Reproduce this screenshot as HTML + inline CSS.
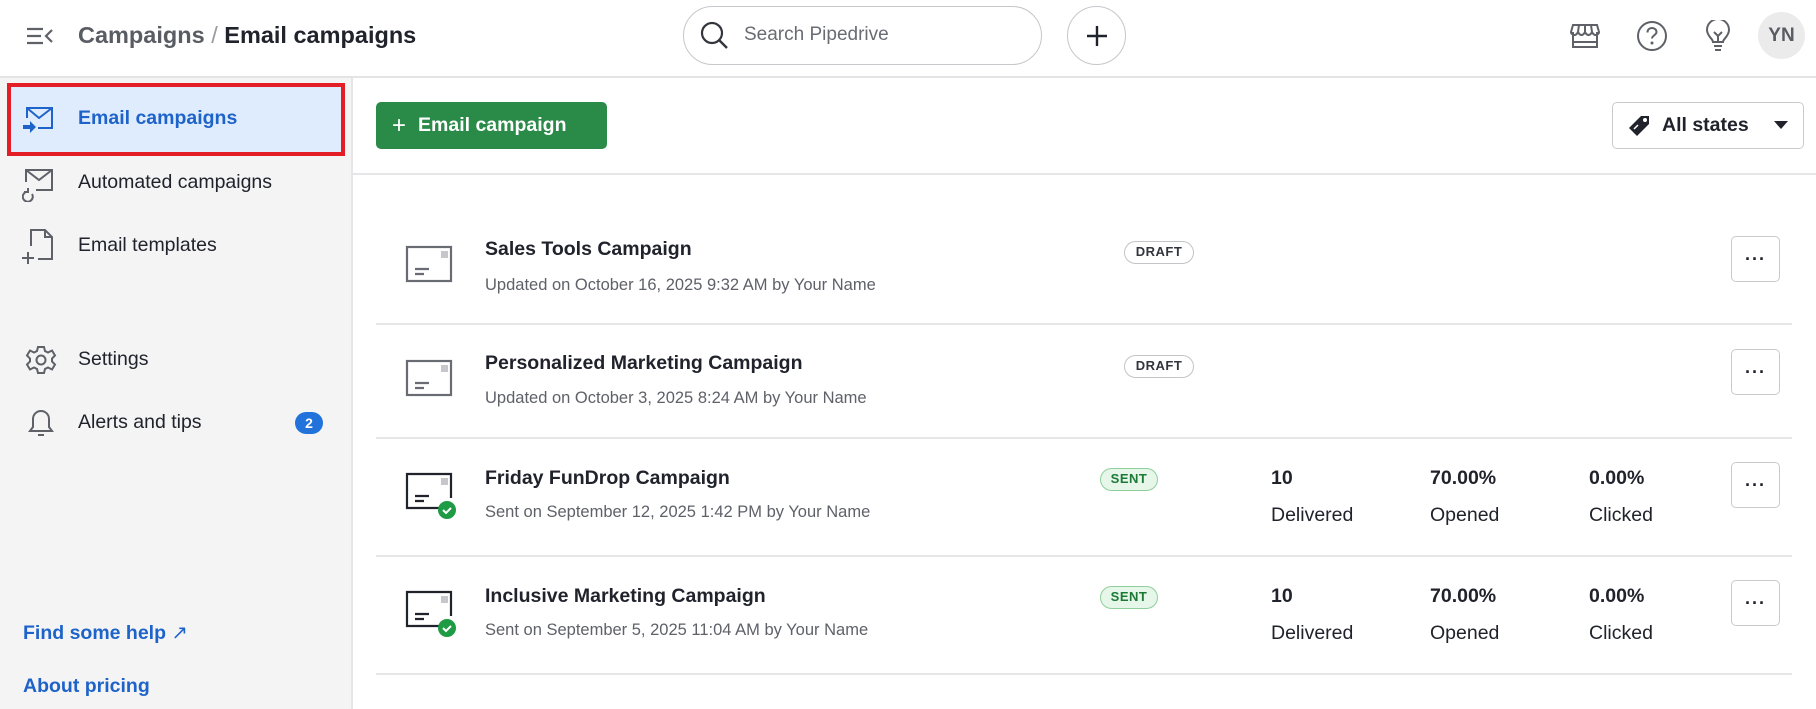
<!DOCTYPE html>
<html><head><meta charset="utf-8"><style>
*{box-sizing:border-box;margin:0;padding:0}
body{width:1816px;height:709px;overflow:hidden;background:#fff;font-family:"Liberation Sans",Arial,sans-serif;color:#21232c;position:relative}
.abs{position:absolute}
.hdr{left:0;top:0;width:1816px;height:78px;border-bottom:2px solid #e4e4e6;background:#fff}
.side{left:0;top:78px;width:353px;height:631px;background:#f4f4f5;border-right:2px solid #e6e6e8}
.nav{font-size:19.5px;color:#21232c}
.ico{stroke:#5f6169;fill:none;stroke-width:2}
.btn3{width:49px;height:46px;border:1px solid #c9cacd;border-radius:5px;background:#fff;left:1731px;font-size:18px;font-weight:bold;text-align:center;line-height:44px;letter-spacing:1px}
.t{font-size:19.5px;font-weight:bold;left:485px}
.s{font-size:16.5px;color:#5f6169;left:485px}
.sep{left:376px;width:1416px;height:2px;background:#e6e6e8}
.badge{font-size:13px;font-weight:bold;border-radius:12px;height:23px;line-height:20px;text-align:center;letter-spacing:.5px}
.draft{border:1.5px solid #c3c4c8;color:#33353d;left:1124px;width:70px}
.sent{border:1.5px solid #8fcf9c;background:#e6f6e9;color:#1c7a36;left:1100px;width:58px}
.v{font-size:19.5px;font-weight:bold}
.l{font-size:19.5px}
</style></head><body>
<div class="abs hdr"></div>
<svg class="abs" style="left:25px;top:24px" width="30" height="24" viewBox="0 0 30 24"><path d="M2 5h16M2 12h14M2 19h16M27 6l-6 6 6 6" stroke="#5f6169" stroke-width="2.2" fill="none"/></svg>
<div class="abs" style="left:78px;top:22px;font-size:23.5px;font-weight:bold"><span style="color:#5a5c64">Campaigns</span> <span style="color:#9a9ca2;font-weight:normal">/</span> Email campaigns</div>
<div class="abs" style="left:683px;top:6px;width:359px;height:59px;border:1.5px solid #c6c7cb;border-radius:30px"></div>
<svg class="abs" style="left:700px;top:21px" width="30" height="30" viewBox="0 0 30 30"><circle cx="12" cy="12" r="10" stroke="#33353d" stroke-width="2.2" fill="none"/><path d="M19 19l8 8" stroke="#33353d" stroke-width="2.4"/></svg>
<div class="abs" style="left:744px;top:24px;font-size:19px;color:#6a6c74">Search Pipedrive</div>
<div class="abs" style="left:1067px;top:6px;width:59px;height:59px;border:1.5px solid #c6c7cb;border-radius:50%"></div>
<svg class="abs" style="left:1085px;top:24px" width="24" height="24"><path d="M12 2v20M2 12h20" stroke="#21232c" stroke-width="2.4"/></svg>
<svg class="abs" style="left:1570px;top:22px" width="30" height="28" viewBox="0 0 30 28"><path class="ico" d="M3 10V25h24V10M3 3h24l2 7c0 2-2 3-3.5 3S23 12 22 10c-1 2-2 3-3.5 3S16 12 15 10c-1 2-2 3-3.5 3S9 12 8 10c-1 2-2 3-3.5 3S1 12 1 10zM9 3l-1 7M15 3v7M21 3l1 7M3 20h24"/></svg>
<svg class="abs" style="left:1636px;top:20px" width="32" height="32" viewBox="0 0 32 32"><circle class="ico" cx="16" cy="16" r="14"/><path class="ico" d="M11.5 12.5c0-3 2-4.5 4.5-4.5s4.5 1.7 4.5 4c0 3-4.5 3.5-4.5 6.5"/><circle cx="16" cy="23" r="1.5" fill="#5f6169"/></svg>
<svg class="abs" style="left:1705px;top:20px" width="26" height="32" viewBox="0 0 26 32"><path class="ico" d="M8 22c0-3-6-6-6-12A11 11 0 0 1 24 10c0 6-6 9-6 12zM9 26h8M10 30h6M9 12l4 4 4-4M13 16v6"/></svg>
<div class="abs" style="left:1758px;top:12px;width:47px;height:47px;border-radius:50%;background:#ebebec;color:#5a5c64;font-size:19px;font-weight:bold;text-align:center;line-height:47px">YN</div>

<div class="abs side"></div>
<div class="abs" style="left:7px;top:83px;width:338px;height:73px;border:4px solid #e41e26;background:#dfecfd"></div>
<svg class="abs" style="left:22px;top:106px" width="34" height="32" viewBox="0 0 34 32"><path d="M5 12V2h25v20H16M5 2l12 10 13-10" stroke="#1e63c9" stroke-width="2" fill="none"/><path d="M1 19h7v-4l6 6-6 6v-4H1z" fill="#1e63c9"/></svg>
<div class="abs nav" style="left:78px;top:107px;color:#1e63c9;font-weight:bold">Email campaigns</div>
<svg class="abs" style="left:22px;top:168px" width="34" height="34" viewBox="0 0 34 34"><path class="ico" d="M4 14V2h26v20H14M4 2l13 10 13-10M10 26a5 5 0 1 1-6-2M2 24h4v-4"/></svg>
<div class="abs nav" style="left:78px;top:171px">Automated campaigns</div>
<svg class="abs" style="left:22px;top:228px" width="34" height="38" viewBox="0 0 34 38"><path class="ico" d="M9 18V2h14l7 7v22H16M23 2v7h7M6 24v12M0 30h12"/></svg>
<div class="abs nav" style="left:78px;top:234px">Email templates</div>
<svg class="abs" style="left:25px;top:344px" width="32" height="32" viewBox="0 0 32 32"><circle class="ico" cx="16" cy="16" r="4.5"/><path class="ico" d="M13 3h6l1 4 3 1.5 4-2 3 5-3 3v3l3 3-3 5-4-2-3 1.5-1 4h-6l-1-4-3-1.5-4 2-3-5 3-3v-3l-3-3 3-5 4 2 3-1.5z"/></svg>
<div class="abs nav" style="left:78px;top:348px">Settings</div>
<svg class="abs" style="left:26px;top:407px" width="30" height="32" viewBox="0 0 30 32"><path class="ico" d="M4 24h22l-3-4V12a8 8 0 0 0-16 0v8zM12 28h6"/></svg>
<div class="abs nav" style="left:78px;top:411px">Alerts and tips</div>
<div class="abs" style="left:295px;top:412px;width:28px;height:22px;border-radius:11px;background:#2173db;color:#fff;font-size:14px;font-weight:bold;text-align:center;line-height:22px">2</div>
<div class="abs" style="left:23px;top:621px;font-size:19.5px;font-weight:bold;color:#1e63c9">Find some help <span style="font-weight:normal">↗</span></div>
<div class="abs" style="left:23px;top:675px;font-size:19.5px;font-weight:bold;color:#1e63c9">About pricing</div>

<div class="abs" style="left:376px;top:102px;width:231px;height:47px;background:#2a8a47;border-radius:5px;color:#fff;font-size:19.5px;font-weight:bold;line-height:47px;padding-left:16px"><span style="font-weight:normal;font-size:24px;margin-right:12px;vertical-align:-2px">+</span>Email campaign</div>
<div class="abs" style="left:1612px;top:102px;width:192px;height:47px;border:1.5px solid #c9cacd;border-radius:5px"></div>
<svg class="abs" style="left:1627px;top:114px" width="24" height="24" viewBox="0 0 24 24"><path d="M14 2h8v8L10 22 2 14z" fill="#21232c"/><circle cx="18" cy="6" r="2" fill="#fff"/><path d="M7 15l4-4" stroke="#fff" stroke-width="1.5"/></svg>
<div class="abs" style="left:1662px;top:114px;font-size:19.5px;font-weight:bold">All states</div>
<svg class="abs" style="left:1773px;top:120px" width="16" height="10"><path d="M1 1h14L8 9z" fill="#21232c"/></svg>
<div class="abs" style="left:353px;top:173px;width:1463px;height:2px;background:#e6e6e8"></div>

<svg class="abs" style="left:405px;top:245px" width="52" height="44" viewBox="0 0 52 44"><rect x="2" y="2" width="44" height="34" fill="none" stroke="#6a6c74" stroke-width="2.2"/><rect x="36" y="6" width="7" height="7" fill="#c6c7cb"/><path d="M10 24h14M10 29h9" stroke="#6a6c74" stroke-width="2.2"/></svg>
<div class="abs t" style="top:238px">Sales Tools Campaign</div>
<div class="abs s" style="top:276px">Updated on October 16, 2025 9:32 AM by Your Name</div>
<div class="abs badge draft" style="top:241px">DRAFT</div>
<div class="abs btn3" style="top:236px">···</div>
<div class="abs sep" style="top:323px"></div>

<svg class="abs" style="left:405px;top:359px" width="52" height="44" viewBox="0 0 52 44"><rect x="2" y="2" width="44" height="34" fill="none" stroke="#6a6c74" stroke-width="2.2"/><rect x="36" y="6" width="7" height="7" fill="#c6c7cb"/><path d="M10 24h14M10 29h9" stroke="#6a6c74" stroke-width="2.2"/></svg>
<div class="abs t" style="top:352px">Personalized Marketing Campaign</div>
<div class="abs s" style="top:389px">Updated on October 3, 2025 8:24 AM by Your Name</div>
<div class="abs badge draft" style="top:355px">DRAFT</div>
<div class="abs btn3" style="top:349px">···</div>
<div class="abs sep" style="top:437px"></div>

<svg class="abs" style="left:405px;top:472px" width="52" height="48" viewBox="0 0 52 48"><path d="M36 36H2V2h44v24" fill="none" stroke="#21232c" stroke-width="2.2"/><rect x="36" y="6" width="7" height="7" fill="#c6c7cb"/><path d="M10 24h14M10 29h9" stroke="#21232c" stroke-width="2.2"/><circle cx="42" cy="38" r="9" fill="#1f9a45"/><path d="M38 38l3 3 5-5" stroke="#fff" stroke-width="2" fill="none"/></svg>
<div class="abs t" style="top:467px">Friday FunDrop Campaign</div>
<div class="abs s" style="top:503px">Sent on September 12, 2025 1:42 PM by Your Name</div>
<div class="abs badge sent" style="top:468px">SENT</div>
<div class="abs v" style="left:1271px;top:467px">10</div><div class="abs l" style="left:1271px;top:504px">Delivered</div>
<div class="abs v" style="left:1430px;top:467px">70.00%</div><div class="abs l" style="left:1430px;top:504px">Opened</div>
<div class="abs v" style="left:1589px;top:467px">0.00%</div><div class="abs l" style="left:1589px;top:504px">Clicked</div>
<div class="abs btn3" style="top:462px">···</div>
<div class="abs sep" style="top:555px"></div>

<svg class="abs" style="left:405px;top:590px" width="52" height="48" viewBox="0 0 52 48"><path d="M36 36H2V2h44v24" fill="none" stroke="#21232c" stroke-width="2.2"/><rect x="36" y="6" width="7" height="7" fill="#c6c7cb"/><path d="M10 24h14M10 29h9" stroke="#21232c" stroke-width="2.2"/><circle cx="42" cy="38" r="9" fill="#1f9a45"/><path d="M38 38l3 3 5-5" stroke="#fff" stroke-width="2" fill="none"/></svg>
<div class="abs t" style="top:585px">Inclusive Marketing Campaign</div>
<div class="abs s" style="top:621px">Sent on September 5, 2025 11:04 AM by Your Name</div>
<div class="abs badge sent" style="top:586px">SENT</div>
<div class="abs v" style="left:1271px;top:585px">10</div><div class="abs l" style="left:1271px;top:622px">Delivered</div>
<div class="abs v" style="left:1430px;top:585px">70.00%</div><div class="abs l" style="left:1430px;top:622px">Opened</div>
<div class="abs v" style="left:1589px;top:585px">0.00%</div><div class="abs l" style="left:1589px;top:622px">Clicked</div>
<div class="abs btn3" style="top:580px">···</div>
<div class="abs sep" style="top:673px"></div>
</body></html>
